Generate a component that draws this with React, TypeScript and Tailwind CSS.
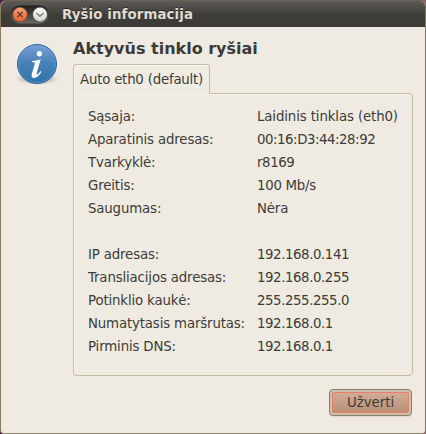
import React from 'react';

type Row = { label: string; value: string; tracking: string };

const rows: Row[] = [
  { label: 'Sąsaja:', value: 'Laidinis tinklas (eth0)', tracking: 'tracking-[-0.12px]' },
  { label: 'Aparatinis adresas:', value: '00:16:D3:44:28:92', tracking: 'tracking-[-0.46px]' },
  { label: 'Tvarkyklė:', value: 'r8169', tracking: 'tracking-[-0.4px]' },
  { label: 'Greitis:', value: '100 Mb/s', tracking: 'tracking-[-0.28px]' },
  { label: 'Saugumas:', value: 'Nėra', tracking: 'tracking-[-0.15px]' },
  { label: '', value: '', tracking: 'tracking-normal' },
  { label: 'IP adresas:', value: '192.168.0.141', tracking: 'tracking-[-0.42px]' },
  { label: 'Transliacijos adresas:', value: '192.168.0.255', tracking: 'tracking-[-0.42px]' },
  { label: 'Potinklio kaukė:', value: '255.255.255.0', tracking: 'tracking-[-0.42px]' },
  { label: 'Numatytasis maršrutas:', value: '192.168.0.1', tracking: 'tracking-[-0.42px]' },
  { label: 'Pirminis DNS:', value: '192.168.0.1', tracking: 'tracking-[-0.42px]' },
];

function WindowButtons() {
  return (
    <svg width="40" height="19" viewBox="0 0 40 19" className="ml-[9px] shrink-0">
      <defs>
        <linearGradient id="pill" x1="0" y1="0" x2="0" y2="1">
          <stop offset="0" stopColor="#1f1e1b" />
          <stop offset="1" stopColor="#6b6962" />
        </linearGradient>
        <linearGradient id="close" x1="0" y1="0" x2="0" y2="1">
          <stop offset="0" stopColor="#f9a584" />
          <stop offset="0.5" stopColor="#f37f52" />
          <stop offset="1" stopColor="#ea6434" />
        </linearGradient>
        <linearGradient id="roll" x1="0" y1="0" x2="0" y2="1">
          <stop offset="0" stopColor="#ffffff" />
          <stop offset="1" stopColor="#d8d5ce" />
        </linearGradient>
      </defs>
      <rect x="0.5" y="0.5" width="38.5" height="18" rx="9" fill="url(#pill)" />
      <circle cx="10" cy="9.5" r="7.2" fill="url(#close)" stroke="#7c3a22" strokeWidth="0.5" />
      <path d="M7.3 6.8L12.7 12.2M12.7 6.8L7.3 12.2" stroke="#6b4433" strokeWidth="1.5" />
      <circle cx="30" cy="9.5" r="7.2" fill="url(#roll)" stroke="#55534d" strokeWidth="0.5" />
      <path d="M26.3 8L30 11.2L33.7 8" fill="none" stroke="#85837d" strokeWidth="1.6" />
    </svg>
  );
}

function InfoIcon() {
  return (
    <svg width="46" height="46" viewBox="0 0 46 46">
      <defs>
        <linearGradient id="info" x1="0" y1="0" x2="0" y2="1">
          <stop offset="0" stopColor="#789fd6" />
          <stop offset="0.5" stopColor="#4680b8" />
          <stop offset="1" stopColor="#2d75ab" />
        </linearGradient>
        <radialGradient id="shade">
          <stop offset="0.4" stopColor="#000000" stopOpacity="0.22" />
          <stop offset="1" stopColor="#000000" stopOpacity="0" />
        </radialGradient>
      </defs>
      <ellipse cx="23" cy="38" rx="22" ry="6" fill="url(#shade)" />
      <circle cx="23" cy="23" r="19.5" fill="url(#info)" stroke="#28639b" strokeWidth="1" />
      <circle cx="23" cy="23" r="18.5" fill="none" stroke="#7aa5d3" strokeOpacity="0.45" strokeWidth="1" />
      <ellipse cx="25.4" cy="12.7" rx="2.6" ry="2.7" fill="#fff" />
      <path
        d="M18.1 20.1Q22.4 19.8 26.7 18.2L22.8 31.8Q22.3 34 23.7 33.2Q25.1 32.3 26.5 30.1L27.4 30.8Q23.9 37.3 19.6 37Q16.8 36.5 17.9 32.5L20.8 22.8Q21.3 21.2 19.7 21.2H17.9Z"
        fill="#fff"
      />
    </svg>
  );
}

export default function App() {
  return (
    <div className="h-[434px] w-[426px] bg-[linear-gradient(90deg,#4d1c42_50%,#995572_50%)] text-[#3c3b37] [font-family:'DejaVu_Sans',sans-serif]">
      <div className="flex h-full w-full flex-col overflow-hidden rounded-t-[6px] rounded-b-[4px] border border-t-[#6b6351] border-r-[#7f775f] border-b-[#92866f] border-l-[#8b7960] bg-[#efebe2]">
        <header className="flex h-[26px] shrink-0 items-center bg-[linear-gradient(#5c5b55,#3d3c37_55%,#3c3b37)]">
          <WindowButtons />
          <h1 className="ml-3 mt-px whitespace-nowrap text-[13.33px] leading-4 font-bold tracking-[0.11px] text-[#dfdbd2] [text-shadow:0_-1px_0_#2b2a27]">
            Ryšio informacija
          </h1>
        </header>
        <main className="flex items-start pl-[13px] pt-[11px]">
          <div className="mt-[3px] w-[59px] shrink-0">
            <InfoIcon />
          </div>
          <section className="w-[340px]">
            <h2 className="h-[26px] whitespace-nowrap text-[16px] leading-[22px] font-bold">Aktyvūs tinklo ryšiai</h2>
            <div className="relative z-10 -mb-px flex h-[30px] w-[137px] items-center rounded-t-[4px] border border-b-0 border-[#c8bba2] bg-[#f0ece4] pl-[6px] text-[13.33px] tracking-[-0.21px] whitespace-nowrap shadow-[inset_1px_1px_0_#faf8f4]">
              Auto eth0 (default)
            </div>
            <div className="h-[283px] rounded-b-[4px] rounded-tr-[4px] border border-[#c8bba2] pt-[11px] pl-[14px] shadow-[inset_1px_1px_0_#f8f5ef]">
              {rows.map((row, i) => (
                <div key={i} className="flex h-[23px] items-center text-[13.33px] whitespace-nowrap">
                  <span className="w-[169px] shrink-0 tracking-[-0.15px]">{row.label}</span>
                  <span className={row.tracking}>{row.value}</span>
                </div>
              ))}
            </div>
          </section>
        </main>
        <footer className="flex justify-end pt-[13px] pr-[13px]">
          <button className="h-[27px] w-[83px] rounded-[4px] border border-[#8a7e6b] bg-[#cfc0ab] p-[2px] shadow-[0_1px_1px_#ddd6c9]">
            <span className="flex h-full items-center justify-center rounded-[2px] border border-[#ec7d66] bg-[linear-gradient(#d1ac98,#ba9077)] text-[13.33px]">
              Užverti
            </span>
          </button>
        </footer>
      </div>
    </div>
  );
}
